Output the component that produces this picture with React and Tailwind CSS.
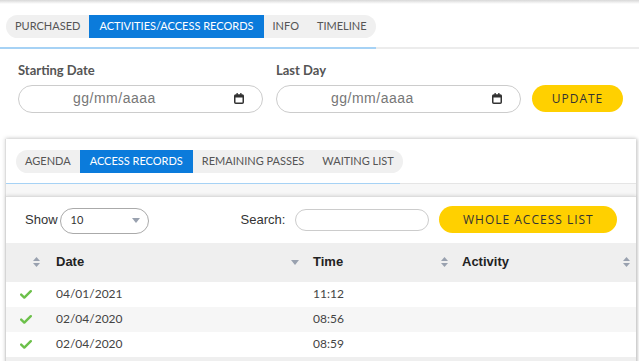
import React from "react";

const SortBoth = () => (
	<svg width="7" height="10" viewBox="0 0 7 10" className="text-gray-400">
		<path d="M3.5 0 L7 4 H0 Z" fill="currentColor" />
		<path d="M3.5 10 L7 6 H0 Z" fill="currentColor" />
	</svg>
);

const SortDown = () => (
	<svg width="8" height="5" viewBox="0 0 8 5" className="text-gray-400">
		<path d="M0 0 H8 L4 5 Z" fill="currentColor" />
	</svg>
);

const Check = () => (
	<svg width="12" height="9" viewBox="0 0 12 9">
		<path d="M1.2 4.6 L4.3 7.6 L10.8 1.2" stroke="#6cc04a" strokeWidth="2.4" fill="none" strokeLinecap="round" strokeLinejoin="round" />
	</svg>
);

const CalendarIcon = () => (
	<svg width="10" height="11" viewBox="0 0 10 11">
		<rect x="0.75" y="2" width="8.5" height="8.25" rx="1" fill="none" stroke="#333" strokeWidth="1.5" />
		<rect x="0.75" y="2" width="8.5" height="2.5" fill="#333" />
		<rect x="2.5" y="0" width="1.3" height="2.5" fill="#333" />
		<rect x="6.2" y="0" width="1.3" height="2.5" fill="#333" />
	</svg>
);

const Tabs = ({ items, active, pad, activePad }) => (
	<div className="flex w-fit bg-[#f0f0f0] rounded-full overflow-hidden text-[11px] uppercase">
		{items.map((t) => (
			<div
				key={t}
				className={
					t === active
						? `${activePad} h-[23px] flex items-center bg-[#0b7bdb] text-white`
						: `${pad} h-[23px] flex items-center text-[#555]`
				}
			>
				{t}
			</div>
		))}
	</div>
);

const DateField = ({ label }) => (
	<div className="flex flex-col w-[245px]">
		<label className="text-[13px] font-bold text-[#555] mb-[4px]">{label}</label>
		<div className="h-[28px] rounded-full border border-[#ccc] flex items-center pl-[54px] pr-[18px] bg-white">
			<span className="text-[#777] text-[14px] tracking-[0.5px] font-['Liberation_Sans',sans-serif] flex-1">gg/mm/aaaa</span>
			<CalendarIcon />
		</div>
	</div>
);

const rows = [
	{ date: "04/01/2021", time: "11:12" },
	{ date: "02/04/2020", time: "08:56" },
	{ date: "02/04/2020", time: "08:59" },
];

export default function App() {
	return (
		<div className="w-[639px] h-[361px] overflow-hidden bg-white font-['Lato',sans-serif] text-[#555]">
			<div className="h-[4px] bg-gradient-to-b from-[#d8d8d8] to-white" />
			<div className="pl-[6px] pt-[11px]">
				<Tabs
					items={["Purchased", "Activities/Access Records", "Info", "Timeline"]}
					active="Activities/Access Records"
					pad="px-[9px]"
					activePad="px-[10px]"
				/>
			</div>
			<div className="flex mt-[9px] h-[2px]">
				<div className="w-[376px] bg-[#a6d2f5]" />
				<div className="flex-1 bg-[#ececec]" />
			</div>
			<div className="flex items-start gap-[13px] pl-[18px] pt-[12px]">
				<DateField label="Starting Date" />
				<DateField label="Last Day" />
				<button className="mt-[24px] ml-[-2px] h-[27px] w-[91px] rounded-full bg-[#ffd000] text-[#333] text-[12px] tracking-[1px] font-['Open_Sans',sans-serif]">
					UPDATE
				</button>
			</div>

			<div className="mt-[26px] ml-[5px] mr-[3px] bg-white shadow-[0_-1px_4px_rgba(0,0,0,0.15),2px_0_3px_rgba(0,0,0,0.12)] border-l border-[#ddd]">
				<div className="pl-[10px] pt-[11px]">
					<Tabs
						items={["Agenda", "Access Records", "Remaining Passes", "Waiting List"]}
						active="Access Records"
						pad="px-[9px]"
						activePad="px-[10px]"
					/>
				</div>
				<div className="flex mt-[10px] h-[1px]">
					<div className="w-[394px] bg-[#a6d2f5]" />
					<div className="flex-1 bg-[#e5e5e5]" />
				</div>
				<div className="h-[12px] bg-[#f7f7f7]" />
				<div className="bg-white border-t border-[#ddd] shadow-[0_-1px_3px_rgba(0,0,0,0.1)]">
					<div className="flex items-center h-[46px] pl-[19px] pr-[16px]">
						<span className="text-[13px] text-[#333] font-['Liberation_Sans',sans-serif] mr-[2px]">Show</span>
						<div className="w-[89px] h-[26px] rounded-full border border-[#aaa] flex items-center pl-[10px] pr-[8px] mt-[2px]">
							<span className="text-[11px] text-[#333] flex-1">10</span>
							<SortDown />
						</div>
						<span className="ml-[92px] text-[13px] text-[#333] font-['Liberation_Sans',sans-serif]">Search:</span>
						<div className="ml-[10px] w-[134px] h-[22px] rounded-full border border-[#ccc]" />
						<button className="ml-[10px] h-[27px] w-[178px] rounded-full bg-[#ffd000] text-[#333] text-[12px] tracking-[1px] font-['Open_Sans',sans-serif]">
							WHOLE ACCESS LIST
						</button>
					</div>
					<div className="grid grid-cols-[50px_257px_149px_1fr] h-[39px] bg-[#efefef] items-center text-[13px] font-bold text-[#222] font-['Liberation_Sans',sans-serif]">
						<div className="flex justify-center pl-[10px]"><SortBoth /></div>
						<div className="flex items-center justify-between pr-[14px]">
							<span>Date</span>
							<SortDown />
						</div>
						<div className="flex items-center justify-between pr-[14px]">
							<span>Time</span>
							<SortBoth />
						</div>
						<div className="flex items-center justify-between pr-[6px]">
							<span>Activity</span>
							<SortBoth />
						</div>
					</div>
					{rows.map((r, i) => (
						<div
							key={i}
							className={`grid grid-cols-[50px_257px_149px_1fr] h-[25px] items-center text-[12px] text-[#444] ${i % 2 === 1 ? "bg-[#f6f6f6]" : "bg-white"}`}
						>
							<div className="flex pl-[14px]"><Check /></div>
							<div>{r.date}</div>
							<div>{r.time}</div>
							<div></div>
						</div>
					))}
					<div className="h-[10px] bg-[#efefef]" />
				</div>
			</div>
		</div>
	);
}
